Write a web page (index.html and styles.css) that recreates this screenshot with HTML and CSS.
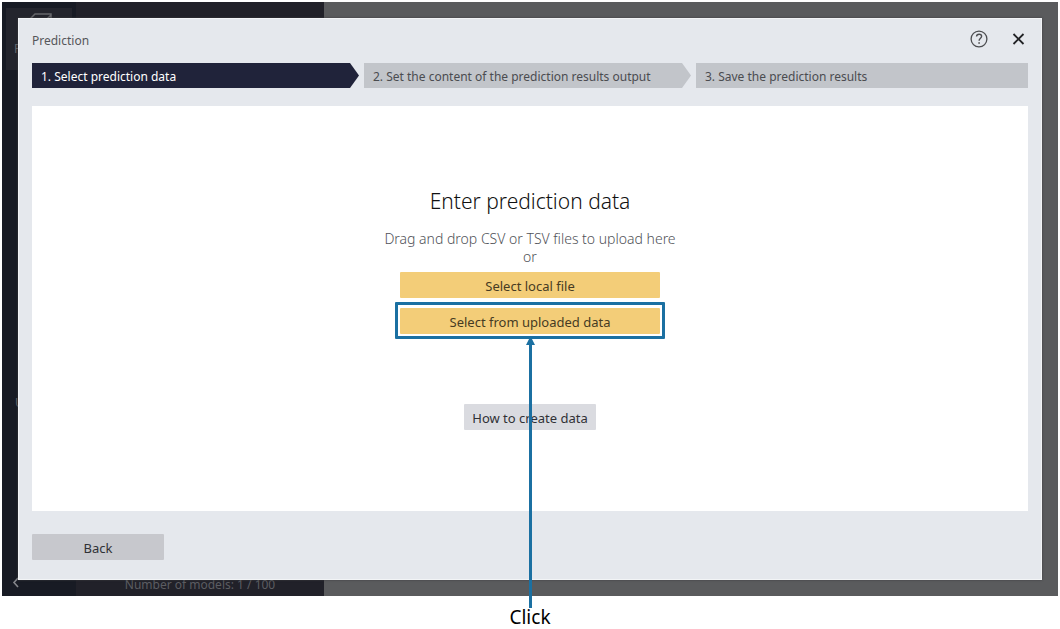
FILE: index.html
```html
<!DOCTYPE html>
<html lang="en">
<head>
<meta charset="utf-8">
<title>Prediction</title>
<link rel="stylesheet" href="styles.css">
</head>
<body>
<main class="app">
  <div class="backdrop">
    <nav class="rail">
      <div class="rail-item">
        <svg class="rail-icon" width="28" height="20" viewBox="0 0 28 20" aria-hidden="true"><path d="M2 8 9 1H25V16L17 20M2 8H19L25 2M19 8V20M2 8V20" fill="none" stroke="currentColor" stroke-width="1.500"/></svg>
        <span class="rail-label">P</span>
      </div>
      <span class="rail-link">U</span>
      <button class="collapse" type="button" aria-label="Collapse">
        <svg width="8" height="11" viewBox="0 0 8 11" aria-hidden="true"><path d="M6 1 2 5.500 6 10" fill="none" stroke="currentColor" stroke-width="1.600"/></svg>
      </button>
    </nav>
    <aside class="models">Number of models: 1 / 100</aside>
    <div class="workspace"></div>
  </div>

  <section class="dialog" role="dialog" aria-labelledby="dialog-title">
    <header class="dialog-header">
      <h1 class="dialog-title" id="dialog-title">Prediction</h1>
      <div class="dialog-tools">
        <button class="tool" type="button" aria-label="Help">
          <svg width="18" height="18" viewBox="0 0 18 18" fill="none" stroke="#4c4d50" aria-hidden="true"><circle cx="9" cy="9" r="7.900" stroke-width="1.300"/><path d="M6.500 6.500C6.600 5 7.700 4.200 9.100 4.200C10.600 4.200 11.600 5 11.600 6.300C11.600 8.200 9.100 8.300 9.100 10.700" stroke-width="1.400"/><path d="M9.100 12.200V13.800" stroke-width="1.600"/></svg>
        </button>
        <button class="tool" type="button" aria-label="Close">
          <svg width="18" height="18" viewBox="0 0 18 18" fill="none" stroke="#222326" aria-hidden="true"><path d="M3.500 4 13.500 14M13.500 4 3.500 14" stroke-width="1.800"/></svg>
        </button>
      </div>
    </header>

    <ol class="steps">
      <li class="step step-current" aria-current="step">1. Select prediction data</li>
      <li class="step">2. Set the content of the prediction results output</li>
      <li class="step step-last">3. Save the prediction results</li>
    </ol>

    <div class="dropzone">
      <h2 class="dropzone-title">Enter prediction data</h2>
      <p class="dropzone-text">Drag and drop CSV or TSV files to upload here<br>or</p>
      <div class="choices">
        <button class="button button-primary" type="button">Select local file</button>
        <div class="callout">
          <button class="button button-primary" type="button">Select from uploaded data</button>
          <svg class="arrow" width="9" height="272" viewBox="0 0 9 272" aria-hidden="true"><path d="M4.500 0 9 9H6V272H3V9H0Z" fill="#1b70a2"/></svg>
        </div>
      </div>
      <button class="button button-help" type="button">How to create data</button>
    </div>

    <footer class="dialog-footer">
      <button class="button button-back" type="button">Back</button>
    </footer>
  </section>
</main>
<p class="caption">Click</p>
</body>
</html>
```
FILE: styles.css
```css
* {
  box-sizing: border-box;
}

body {
  display: flex;
  flex-direction: column;
  min-height: 100vh;
  margin: 0;
  padding: 2px 2px 0;
  background: #fff;
  font-family: "Noto Sans", "Open Sans", sans-serif;
  font-size: 12px;
  line-height: 18px;
}

h1, h2, p, ol {
  margin: 0;
  padding: 0;
  font-weight: 400;
}

button {
  padding: 0;
  border: 0;
  background: none;
  font: inherit;
}

.app {
  position: relative;
  display: flex;
  flex: 1;
  padding: 16px;
}

.backdrop {
  position: absolute;
  inset: 0;
  display: flex;
  overflow: hidden;
  background: #5a5b5d;
}

.rail {
  display: flex;
  flex: 0 0 74px;
  flex-direction: column;
  padding: 6px 4px;
  background: #181b24;
  color: #66676b;
}

.rail-item {
  display: flex;
  flex-direction: column;
  height: 62px;
  padding-top: 5px;
  background: #24252d;
}

.rail-icon {
  margin-left: 20px;
}

.rail-label {
  padding: 7px 0 0 8px;
}

.rail-link {
  padding: 324px 0 0 9px;
}

.collapse {
  display: flex;
  align-self: flex-start;
  margin-top: auto;
  padding: 0 0 2px 6px;
  color: #85868a;
}

.models {
  display: flex;
  flex: 0 0 248px;
  align-items: flex-end;
  justify-content: center;
  padding-bottom: 2px;
  background: #212129;
  color: #5c5d62;
}

.workspace {
  flex: 1;
}

.dialog {
  position: relative;
  display: flex;
  flex: 1;
  flex-direction: column;
  padding: 0 13px 19px;
  border: 1px solid #f2f4f6;
  background: #e5e8ed;
  box-shadow: 0 0 2px #3c3d3f;
}

.dialog-header {
  display: flex;
  align-items: center;
  justify-content: space-between;
  height: 44px;
}

.dialog-title {
  color: #55565a;
  font-size: 12px;
}

.dialog-tools {
  display: flex;
  gap: 22px;
  padding-bottom: 4px;
}

.tool {
  display: flex;
}

.steps {
  display: grid;
  grid-template-columns: repeat(3, 1fr);
  margin-bottom: 18px;
  list-style: none;
}

.step {
  margin-right: 5px;
  padding: 5px 9px 2px;
  background: #c2c5ca;
  color: #4b4c50;
  clip-path: polygon(0 0, calc(100% - 9px) 0, 100% 50%, calc(100% - 9px) 100%, 0 100%);
}

.step-current {
  background: #20233a;
  color: #fff;
}

.step-last {
  margin-right: 0;
  clip-path: none;
}

.dropzone {
  display: flex;
  flex: 1;
  flex-direction: column;
  align-items: center;
  justify-content: center;
  background: #fff;
}

.dropzone-title {
  margin-bottom: 16px;
  color: #111;
  font-size: 21px;
  font-weight: 300;
  line-height: 26px;
}

.dropzone-text {
  margin-bottom: 6px;
  color: #505258;
  font-size: 14px;
  font-weight: 300;
  text-align: center;
}

.choices {
  display: flex;
  flex-direction: column;
  align-items: center;
  gap: 4px;
  margin-bottom: 65px;
}

.button {
  height: 26px;
  padding-top: 2px;
  border-radius: 1px;
  color: #303136;
  font-size: 13px;
}

.button-primary {
  width: 260px;
  background: #f3cd78;
  color: #463b23;
}

.callout {
  position: relative;
  display: flex;
  padding: 3px 2px 2px;
  border: 3px solid #1b70a2;
  border-radius: 1px;
}

.arrow {
  position: absolute;
  top: 100%;
  left: calc(50% - 4px);
}

.button-help {
  padding: 2px 8px 0;
  background: #dadbe0;
}

.dialog-footer {
  padding-top: 23px;
}

.button-back {
  width: 132px;
  background: #c7c8cd;
}

.caption {
  height: 33px;
  padding-top: 9px;
  color: #000;
  font-size: 19px;
  line-height: 24px;
  text-align: center;
}
```
